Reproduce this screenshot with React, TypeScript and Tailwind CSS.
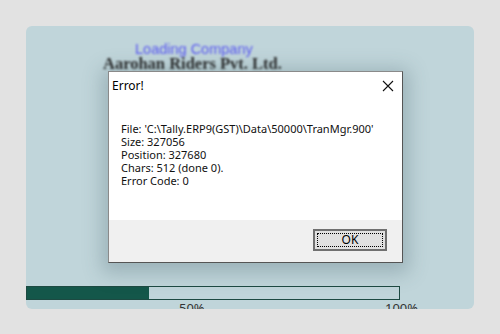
import React from "react";

export default function App() {
  const seg = { fontFamily: '"Noto Sans", "Open Sans", sans-serif' };
  return (
    <div className="w-[500px] h-[334px] bg-[#e2e2e2] pt-[26px] pl-[26px]">
      <div className="w-[448px] h-[283px] rounded-[6px] bg-[#c0d5da] overflow-hidden flex flex-col">
        <div
          className="shrink-0 pl-[109px] pt-[16px] h-[31px] text-[14.5px] leading-[14px] text-[#5a5af0] blur-[1.2px]"
          style={{ fontFamily: '"Liberation Sans", Arial, sans-serif' }}
        >
          Loading Company
        </div>
        <div
          className="shrink-0 pl-[77px] h-[14px] text-[16.5px] leading-[14px] font-bold text-[#2a2a2a] blur-[1.3px] whitespace-nowrap"
          style={{ fontFamily: '"Liberation Serif", "Times New Roman", serif' }}
        >
          Aarohan Riders Pvt. Ltd.
        </div>
        <div className="shrink-0 ml-[82px] w-[295px] h-[192px] bg-white border border-[#8a8a8a] border-r-[#555] border-b-[#555] flex flex-col shadow-[0_4px_18px_6px_rgba(60,90,100,0.28)] relative" style={seg}>
          <div className="shrink-0 h-[27px] flex items-center justify-between pl-[3px] pr-[8px] pt-[1px]">
            <span className="text-[12px] text-black leading-none">Error!</span>
            <svg width="12" height="12" viewBox="0 0 12 12">
              <path d="M1 1 L11 11 M11 1 L1 11" stroke="#111" strokeWidth="1.1" />
            </svg>
          </div>
          <div className="flex-1 pl-[12px] pt-[23px] text-[11px] leading-[13px] text-[#111]">
            <div>File: 'C:\Tally.ERP9(GST)\Data\50000\TranMgr.900'</div>
            <div>Size: 327056</div>
            <div>Position: 327680</div>
            <div>Chars: 512 (done 0).</div>
            <div>Error Code: 0</div>
          </div>
          <div className="shrink-0 h-[42px] bg-[#f0f0f0] flex items-start justify-end pr-[15px] pt-[9px]">
            <div className="w-[74px] h-[22px] bg-[#e1e1e1] border-2 border-[#707070] p-[2px]">
              <div className="w-full h-full border border-dotted border-black flex items-center justify-center text-[12px] leading-none text-black">
                OK
              </div>
            </div>
          </div>
        </div>
        <div className="shrink-0 mt-[23px] w-[374px] h-[14px] border border-[#1d4a42] flex">
          <div className="w-[122px] h-full bg-[#14574a]" />
        </div>
        <div
          className="shrink-0 relative h-[20px] text-[13px] text-[#333]"
          style={{ fontFamily: '"Noto Sans", sans-serif' }}
        >
          <span className="absolute left-[153px] top-[1px] leading-[14px]">50%</span>
          <span className="absolute left-[359px] top-[1px] leading-[14px]">100%</span>
        </div>
      </div>
    </div>
  );
}
